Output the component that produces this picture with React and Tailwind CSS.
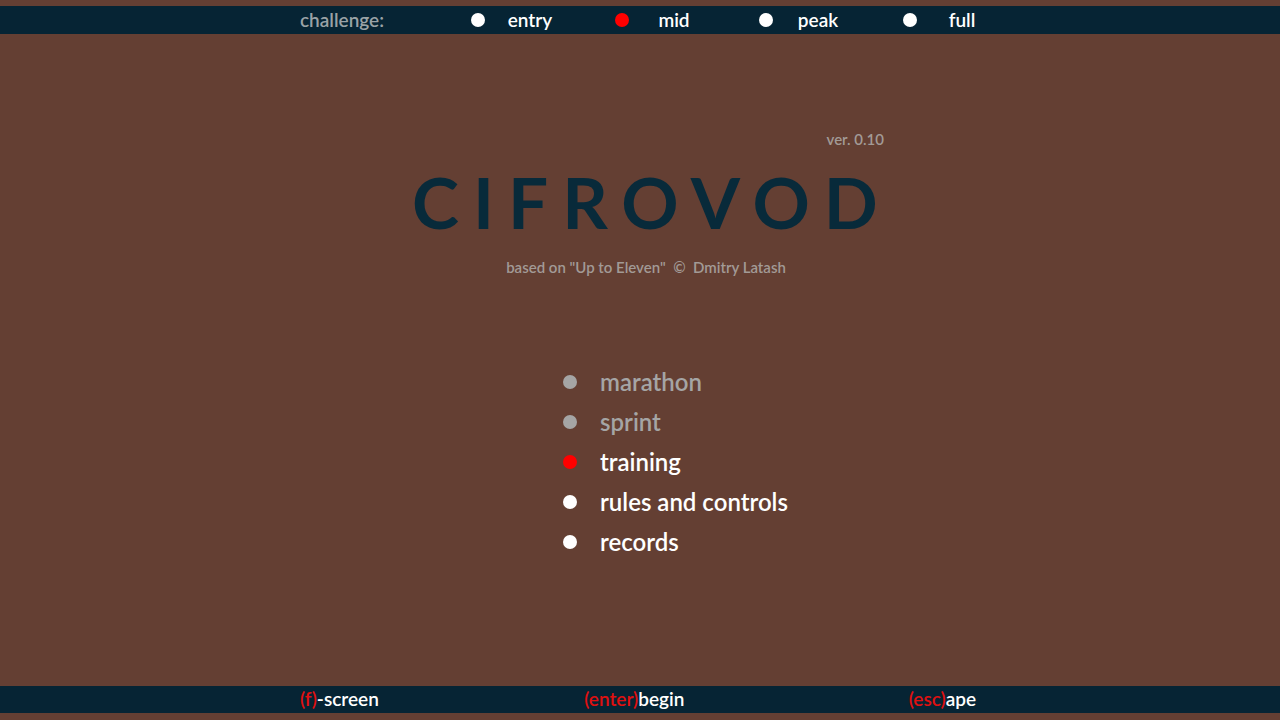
import React from 'react';

const levels = [
    { name: 'entry', active: false },
    { name: 'mid', active: true },
    { name: 'peak', active: false },
    { name: 'full', active: false },
];

const menu = [
    { name: 'marathon', state: 'off' },
    { name: 'sprint', state: 'off' },
    { name: 'training', state: 'on' },
    { name: 'rules and controls', state: 'normal' },
    { name: 'records', state: 'normal' },
];

function Dot({ color }) {
    return <span className={`block w-[14px] h-[14px] rounded-full ${color}`} />;
}

export default function App() {
    return (
        <div className="w-[1280px] h-[720px] bg-[#643f33] flex flex-col font-['Lato',sans-serif]">
            {/* top bar */}
            <div className="mt-[6px] h-[28px] bg-[#062434] flex items-center text-[19px] font-semibold">
                <div className="ml-[300px] w-[160px] text-[#9aa2a6]">challenge:</div>
                {levels.map(l => (
                    <div key={l.name} className="w-[144px] flex items-center">
                        <div className="w-[36px] flex justify-center">
                            <Dot color={l.active ? 'bg-[#ff0000]' : 'bg-white'} />
                        </div>
                        <div className="w-[68px] text-center text-white">{l.name}</div>
                    </div>
                ))}
            </div>

            {/* main */}
            <div className="flex-1 flex flex-col">
                <div className="mt-[96px] ml-[412px] w-[472px] flex flex-col">
                    <div className="self-end text-[15px] font-semibold text-[#a29a96] leading-[18px]">ver. 0.10</div>
                    <div className="mt-[9px] text-[71px] font-bold text-[#082a3a] tracking-[14px] leading-[90px] whitespace-nowrap">
                        CIFROVOD
                    </div>
                    <div className="mt-[10px] text-center text-[15px] font-semibold text-[#a29a96] leading-[20px] pr-[4px]">
                        based on "Up to Eleven" &nbsp;©&nbsp; Dmitry Latash
                    </div>
                </div>

                <div className="mt-[85px] ml-[563px] flex flex-col">
                    {menu.map(m => (
                        <div key={m.name} className="h-[40px] flex items-center">
                            <div className="w-[37px] flex justify-start">
                                <Dot color={m.state === 'off' ? 'bg-[#a5a5a5]' : m.state === 'on' ? 'bg-[#ff0000]' : 'bg-white'} />
                            </div>
                            <div className={`text-[24px] font-semibold ${m.state === 'off' ? 'text-[#a5a5a5]' : 'text-white'}`}>
                                {m.name}
                            </div>
                        </div>
                    ))}
                </div>
            </div>

            {/* bottom bar */}
            <div className="mb-[7px] h-[27px] bg-[#062434] flex items-center text-[19px] font-semibold">
                <div className="ml-[300px] w-[676px] flex justify-between">
                    <span className="text-white"><span className="text-[#e01010]">(f)</span>-screen</span>
                    <span className="text-white mr-[19px]"><span className="text-[#e01010]">(enter)</span>begin</span>
                    <span className="text-white"><span className="text-[#e01010]">(esc)</span>ape</span>
                </div>
            </div>
        </div>
    );
}
